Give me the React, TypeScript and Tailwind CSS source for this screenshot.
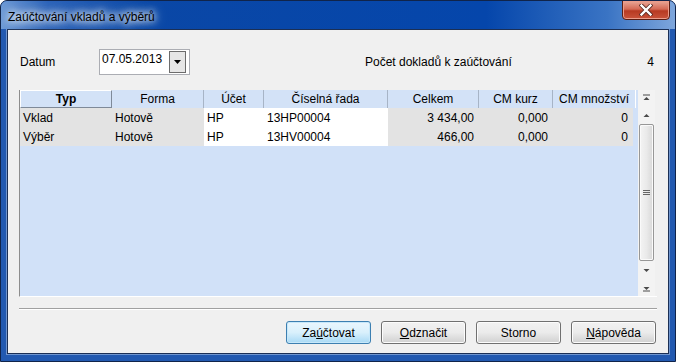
import React from 'react';

const headers: { label: string; w: string; cls: string }[] = [
  { label: 'Typ', w: 'w-[92px]', cls: 'font-bold border-t border-l border-t-white border-l-white border-b border-r border-b-[#7f8a99] border-r-[#7f8a99]' },
  { label: 'Forma', w: 'w-[92px]', cls: 'border-r border-r-[#a7b4c6]' },
  { label: 'Účet', w: 'w-[60px]', cls: 'border-r border-r-[#a7b4c6]' },
  { label: 'Číselná řada', w: 'w-[124px]', cls: 'border-r border-r-[#a7b4c6]' },
  { label: 'Celkem', w: 'w-[91px]', cls: 'border-r border-r-[#a7b4c6]' },
  { label: 'CM kurz', w: 'w-[74px]', cls: 'border-r border-r-[#a7b4c6]' },
  { label: 'CM množství', w: 'w-[83px]', cls: 'border-r border-r-white' },
];

const widths = ['w-[92px]', 'w-[92px]', 'w-[60px]', 'w-[124px]', 'w-[91px]', 'w-[74px]', 'w-[80px]'];

const rows: string[][] = [
  ['Vklad', 'Hotově', 'HP', '13HP00004', '3 434,00', '0,000', '0'],
  ['Výběr', 'Hotově', 'HP', '13HV00004', '466,00', '0,000', '0'],
];

const Tri: React.FC<{ down?: boolean; bar?: 'top' | 'bottom' }> = ({ down, bar }) => (
  <svg width="9" height="8" viewBox="0 0 9 8">
    {bar === 'top' && <rect x="1" y="0.5" width="7" height="1" fill="#4a4a4a" />}
    {down ? (
      <path d="M1.5 3h6L4.5 6z" fill="#4a4a4a" />
    ) : (
      <path d="M1.5 6h6L4.5 3z" fill="#4a4a4a" />
    )}
    {bar === 'bottom' && <rect x="1" y="6.5" width="7" height="1" fill="#4a4a4a" />}
  </svg>
);

const Btn: React.FC<{ children: React.ReactNode; primary?: boolean }> = ({ children, primary }) => (
  <button
    className={
      primary
        ? 'w-[85px] h-[23px] rounded-[3px] border border-[#3c7fb1] bg-gradient-to-b from-[#eaf6fd] via-[#d9f0fc] to-[#a7d9f5] shadow-[inset_0_0_0_1px_#c7e8fa] text-[12px] text-black'
        : 'w-[85px] h-[23px] rounded-[3px] border border-[#707070] bg-gradient-to-b from-[#f2f2f2] via-[#ebebeb] to-[#d0d0d0] shadow-[inset_0_0_0_1px_#fcfcfc] text-[12px] text-black'
    }
  >
    {children}
  </button>
);

export default function App() {
  return (
    <div className="w-[676px] h-[362px] flex flex-col rounded-t-[7px] border border-[#10244a] bg-[#2259b0] font-['Liberation_Sans',Arial,sans-serif] text-black overflow-hidden">
      {/* title bar */}
      <div className="h-[28px] shrink-0 flex items-start bg-[linear-gradient(90deg,#6d9ad6_0%,#2c63b9_7%,#0a47a6_22%,#0546ab_72%,#3a74c4_90%,#7ea6dc_100%)] relative">
        <span className="mt-[7px] ml-[7px] text-[12px] [text-shadow:0_0_6px_#fff,0_0_10px_#fff,0_0_14px_#e8f0fa]">
          Zaúčtování vkladů a výběrů
        </span>
        <div className="absolute left-[621px] top-[-1px] w-[48px] h-[20px] rounded-b-[4px] border border-[#5a1e14] bg-[linear-gradient(180deg,#e9a898_0%,#d46a55_45%,#b73a22_55%,#c9543b_100%)] shadow-[inset_0_0_0_1px_#eb9d8b] flex items-center justify-center">
          <svg width="14" height="12" viewBox="0 0 14 12">
            <path d="M2.5 1.5l9 9M11.5 1.5l-9 9" stroke="#5a2a22" strokeWidth="4" strokeLinecap="square" />
            <path d="M2.5 1.5l9 9M11.5 1.5l-9 9" stroke="#ffffff" strokeWidth="2.4" strokeLinecap="square" />
          </svg>
        </div>
      </div>

      {/* client area */}
      <div className="flex-1 mx-[6px] mb-[7px] border border-[#1b2f55] shadow-[0_0_0_1px_#6f95cf] bg-[#f0f0f0] flex flex-col px-[11px] pt-[19px] text-[12px]">
        <div className="h-[26px] flex items-center">
          <span className="w-[80px] pl-[1px]">Datum</span>
          <div className="w-[91px] h-[26px] border border-[#abadb3] bg-white flex items-start">
            <span className="flex-1 pl-[2px] text-[#000]">07.05.2013</span>
            <div className="w-[17px] h-[22px] mt-[1px] mr-[3px] border border-[#6c6c6c] bg-[#e6e6e6] flex items-center justify-center">
              <svg width="8" height="4" viewBox="0 0 8 4"><path d="M0 0h7L3.5 4z" fill="#000" /></svg>
            </div>
          </div>
          <span className="ml-[175px] flex-1">Počet dokladů k zaúčtování</span>
          <span className="mr-[3px]">4</span>
        </div>

        {/* grid */}
        <div className="mt-[15px] h-[207px] flex border-l border-l-[#8d8d8d] border-b border-b-white">
          <div className="flex-1 bg-[#d1e1f8] flex flex-col">
            <div className="h-[18px] flex">
              {headers.map((h) => (
                <div key={h.label} className={`${h.w} ${h.cls} h-[18px] shrink-0 bg-[#d3e2f7] flex items-center justify-center`}>
                  {h.label}
                </div>
              ))}
            </div>
            {rows.map((r, i) => (
              <div key={i} className="h-[19px] flex">
                {r.map((c, j) => (
                  <div
                    key={j}
                    className={`${widths[j]} shrink-0 flex items-center ${j >= 4 ? 'justify-end pr-[5px]' : 'pl-[3px]'} ${j === 2 || j === 3 ? 'bg-white' : 'bg-[#e3e3e3]'}`}
                  >
                    {c}
                  </div>
                ))}
              </div>
            ))}
          </div>
          {/* scrollbar */}
          <div className="w-[17px] bg-[#f3f3f3] flex flex-col items-center mr-[2px]">
            <div className="h-[16px] flex items-center justify-center"><Tri bar="top" /></div>
            <div className="h-[18px] flex items-center justify-center"><Tri /></div>
            <div className="w-[15px] h-[137px] rounded-[2px] border border-[#979797] bg-gradient-to-r from-[#f4f4f4] via-[#eaeaea] to-[#d8d8d8] shadow-[inset_0_0_0_1px_#fafafa] flex items-center justify-center">
              <svg width="7" height="6" viewBox="0 0 7 6">
                <path d="M0 0.5h7M0 2.5h7M0 4.5h7" stroke="#666" strokeWidth="1" />
              </svg>
            </div>
            <div className="h-[18px] flex items-center justify-center"><Tri down /></div>
            <div className="h-[17px] flex items-center justify-center"><Tri down bar="bottom" /></div>
          </div>
        </div>

        <div className="mt-[11px] h-[2px] border-t border-t-[#a0a0a0] border-b border-b-white" />

        <div className="mt-[11px] flex justify-end gap-[10px] pr-[1px]">
          <Btn primary>Za<span className="underline">ú</span>čtovat</Btn>
          <Btn><span className="underline">O</span>dznačit</Btn>
          <Btn>Storno</Btn>
          <Btn><span className="underline">N</span>ápověda</Btn>
        </div>
      </div>
    </div>
  );
}
